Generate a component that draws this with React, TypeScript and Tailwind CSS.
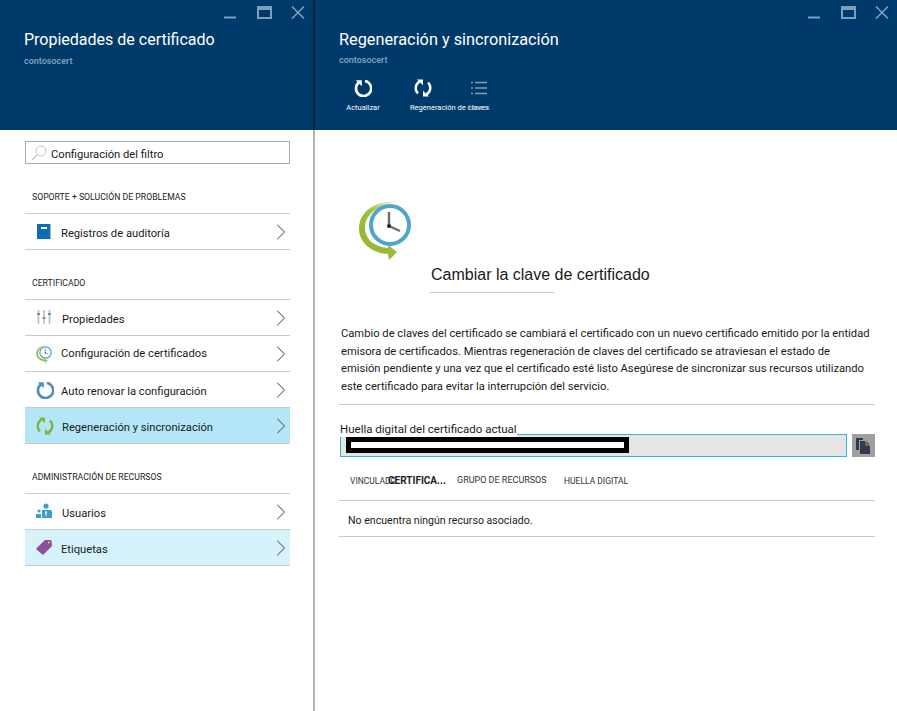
import { ChevronRight } from 'lucide-react'

const FONT = "font-['Roboto','Noto_Sans',sans-serif]"

function WindowButtons({ pad }: { pad: string }) {
  return (
    <div className={`flex h-[30px] items-start justify-end pt-[5px] ${pad}`}>
      <svg width="82" height="14" viewBox="0 0 82 14" fill="none" stroke="#7d9fbe">
        <path d="M1 12.5h12" strokeWidth="2" />
        <path d="M35 2h13v11H35z" strokeWidth="2" />
        <path d="M35 3.5h13" strokeWidth="3" />
        <path d="M69 1.5l12 12M81 1.5l-12 12" strokeWidth="1.6" />
      </svg>
    </div>
  )
}

function BookIcon() {
  return (
    <svg width="16" height="16" viewBox="0 0 16 16">
      <rect x="1" y="1" width="13" height="15" fill="#0f6db6" />
      <rect x="14" y="1" width="1" height="15" fill="#8fbcdd" />
      <rect x="5" y="4" width="6" height="2" fill="#ffffff" />
    </svg>
  )
}

function SlidersIcon() {
  return (
    <svg width="16" height="16" viewBox="0 0 16 16" fill="none">
      <path d="M2.5 1v14M8 1v14M13.5 1v14" stroke="#b5bfc4" strokeWidth="1.6" />
      <path d="M1 5h3M6.5 9h3M12 5h3" stroke="#7c929d" strokeWidth="2" />
    </svg>
  )
}

function ClockIcon({ width, height, id }: { width: number; height: number; id: string }) {
  return (
    <svg width={width} height={height} viewBox="0 0 52 60">
      <defs>
        <linearGradient id={id} x1="0.7" y1="0" x2="0.3" y2="0.6">
          <stop offset="0" stopColor="#dbe6b4" />
          <stop offset="0.45" stopColor="#a4c23f" />
          <stop offset="1" stopColor="#98b838" />
        </linearGradient>
      </defs>
      <path d="M38 2C16 0 0 12 0 29c0 13 12 24 29 25l1 6 8-8-9-7v3C14 47 6 38 6 28 6 14 20 4 38 2z" fill={`url(#${id})`} />
      <circle cx="31" cy="25" r="19" fill="#ffffff" stroke="#4ea5cc" strokeWidth="4" />
      <path d="M30 12v14l11 5" fill="none" stroke="#6b6b6b" strokeWidth="2.4" />
      <circle cx="30" cy="26" r="2" fill="#222222" />
    </svg>
  )
}

function RefreshIcon({ color }: { color: string }) {
  return (
    <svg width="18" height="18" viewBox="0 0 18 18" fill="none">
      <path d="M5 3.4A7.6 7.6 0 1 0 11 2" stroke={color} strokeWidth="2.6" />
      <path d="M1.8 1.2h6v6z" fill={color} />
    </svg>
  )
}

function SyncIcon({ color }: { color: string }) {
  return (
    <svg width="18" height="18" viewBox="0 0 18 18" fill="none">
      <path d="M5.5 2.6A7.4 7.4 0 0 0 4 14.4" stroke={color} strokeWidth="2.4" />
      <path d="M12.5 15.4A7.4 7.4 0 0 0 14 3.6" stroke={color} strokeWidth="2.4" />
      <path d="M3 0.6h6v5.6zM15 17.4H9v-5.6z" fill={color} />
    </svg>
  )
}

function UsersIcon() {
  return (
    <svg width="16" height="16" viewBox="0 0 16 16" fill="#3f9ccb">
      <circle cx="10" cy="3" r="2.6" />
      <path d="M6 7h8a2 2 0 0 1 2 2v6H6z" />
      <circle cx="3" cy="8" r="1.6" />
      <path d="M0 11h5v4H0z" />
      <path d="M10 8l-1 1 1 5 1-5z" fill="#ffffff" />
    </svg>
  )
}

function TagIcon() {
  return (
    <svg width="16" height="16" viewBox="0 0 16 16">
      <path d="M9 1h5.5a1 1 0 0 1 1 1l.5 5-8.5 8.5a1 1 0 0 1-1.2 0L.5 10.5a1 1 0 0 1 0-1.2z" fill="#8b4f9c" />
      <circle cx="12.8" cy="3.6" r="1" fill="#d8c4de" />
    </svg>
  )
}

function CopyIcon() {
  return (
    <svg width="15" height="16" viewBox="0 0 15 16">
      <path d="M0 0h7v2H3v10H0z" fill="#2f3b48" />
      <path d="M4 3h6l4 4v9H4z" fill="#2f3b48" />
      <path d="M10 3v4h4" fill="none" stroke="#a0a0a0" />
    </svg>
  )
}

interface NavRowProps {
  icon: React.ReactNode
  label: string
  bg?: string
  textPad?: string
}

function NavRow({ icon, label, bg = '', textPad = 'pl-[36px] pt-[6px]' }: NavRowProps) {
  return (
    <div className={`relative flex h-[36px] items-center border-b border-[#cbcbcb] ${bg}`}>
      <div className="absolute left-[11px] top-[9px]">{icon}</div>
      <span className={`${textPad} text-[11.2px] text-[#1a1a1a]`}>{label}</span>
      <ChevronRight className="ml-auto -mr-[5px] text-[#666666]" size={28} strokeWidth={0.9} />
    </div>
  )
}

function SectionLabel({ children, className }: { children: string; className: string }) {
  return <div className={`pl-[7px] text-[8.7px] uppercase leading-[10px] text-[#222222] ${className}`}>{children}</div>
}

export default function App() {
  return (
    <div className={`flex h-[711px] w-[897px] overflow-hidden bg-white ${FONT}`}>
      {/* Left blade */}
      <div className="w-[315px] shrink-0 border-r-2 border-[#b4b4b4]">
        <div className="h-[130px] border-r-2 border-[#0d2238] -mr-[2px] bg-[#003a6a] pl-[24px] pr-[9px]">
          <WindowButtons pad="-mr-[1px]" />
          <div className="text-[16px] leading-[20px] text-white">Propiedades de certificado</div>
          <div className="mt-[6px] text-[9px] font-semibold leading-[10px] text-[#7d9fbe]">contosocert</div>
        </div>

        <div className="pl-[25px] pr-[23px] pt-[11px]">
          <div className="flex h-[23px] items-center border border-[#a9a9a9] pl-[5px]">
            <svg width="16" height="16" viewBox="0 0 16 16" fill="none" stroke="#c4c4c4">
              <circle cx="10" cy="6" r="5" />
              <path d="M6 10l-5 5" strokeWidth="1.4" />
            </svg>
            <span className="ml-[4px] pt-[6px] text-[11.2px] text-[#1a1a1a]">Configuración del filtro</span>
          </div>

          <SectionLabel className="mt-[28px] mb-[11px]">Soporte + solución de problemas</SectionLabel>
          <div className="border-t border-[#cbcbcb]">
            <NavRow icon={<BookIcon />} label="Registros de auditoría" />
          </div>

          <SectionLabel className="mt-[28px] mb-[11px]">Certificado</SectionLabel>
          <div className="border-t border-[#cbcbcb]">
            <NavRow icon={<SlidersIcon />} label="Propiedades" textPad="pl-[37px] pt-[6px]" />
            <NavRow
              icon={<ClockIcon width={16} height={18} id="clock-small" />}
              label="Configuración de certificados"
              textPad="pl-[36px] pt-[2px]"
            />
            <NavRow icon={<RefreshIcon color="#4d8fb8" />} label="Auto renovar la configuración" />
            <NavRow
              icon={<SyncIcon color="#7fb53c" />}
              label="Regeneración y sincronización"
              bg="bg-[#b3e7f8]"
              textPad="pl-[37px] pt-[6px]"
            />
          </div>

          <SectionLabel className="mt-[28px] mb-[11px]">Administración de recursos</SectionLabel>
          <div className="border-t border-[#cbcbcb]">
            <NavRow icon={<UsersIcon />} label="Usuarios" textPad="pl-[37px] pt-[6px]" />
            <NavRow icon={<TagIcon />} label="Etiquetas" bg="bg-[#d6f2fb]" />
          </div>
        </div>
      </div>

      {/* Right blade */}
      <div className="min-w-0 flex-1">
        <div className="h-[130px] bg-[#003a6a] pl-[24px] pr-[9px]">
          <WindowButtons pad="-mr-[1px]" />
          <div className="text-[16.3px] leading-[20px] text-white">Regeneración y sincronización</div>
          <div className="mt-[5px] text-[9px] font-semibold leading-[10px] text-[#7d9fbe]">contosocert</div>
          <div className="mt-[14px] flex text-white">
            <div className="flex w-[48px] flex-col items-center">
              <RefreshIcon color="#ffffff" />
              <span className="mt-[6px] whitespace-nowrap text-[7.5px] leading-[10px]">Actualizar</span>
            </div>
            <div className="ml-[12px] flex w-[48px] flex-col items-center">
              <SyncIcon color="#ffffff" />
              <span className="mt-[6px] self-start whitespace-nowrap pl-[11px] text-[7.5px] leading-[10px]">
                Regeneración de claves
              </span>
            </div>
            <div className="ml-[17px] flex w-[30px] flex-col items-center">
              <svg width="18" height="18" viewBox="0 0 18 18" stroke="#7d9fbe" fill="none">
                <path d="M5 3.5h12M5 9h12M5 14.5h12M1 3.5h2M1 9h2M1 14.5h2" strokeWidth="1.4" />
              </svg>
              <span className="mt-[6px] whitespace-nowrap text-[7.5px] leading-[10px] text-[#9db7cf]">Llaves</span>
            </div>
          </div>
        </div>

        <div className="pl-[24px] pr-[22px]">
          <div className="ml-[20px] pt-[70px]">
            <ClockIcon width={52} height={60} id="clock-large" />
          </div>
          <div className="ml-[91px] mt-[5px] w-[124px] whitespace-nowrap border-b border-[#c8c8c8] pb-[7px] pl-[1px] font-['Liberation_Sans',sans-serif] text-[16px] leading-[20px] text-[#1a1a1a]">
            Cambiar la clave de certificado
          </div>

          <p className="mt-[32px] border-b border-[#cbcbcb] pb-[9px] pl-[2px] pr-[5px] text-[11.2px] leading-[17.6px] text-[#1a1a1a]">
            Cambio de claves del certificado se cambiará el certificado con un nuevo certificado emitido por la entidad
            emisora de certificados. Mientras regeneración de claves del certificado se atraviesan el estado de emisión
            pendiente y una vez que el certificado esté listo Asegúrese de sincronizar sus recursos utilizando este
            certificado para evitar la interrupción del servicio.
          </p>

          <div className="relative z-10 mt-[16px] w-fit bg-white pl-[1px] text-[11.5px] leading-[16px] text-[#1a1a1a]">
            Huella digital del certificado actual
          </div>
          <div className="-mt-[3px] ml-[1px] flex items-stretch">
            <div className="relative h-[23px] w-[507px] border border-[#2fb3d6] bg-[#e5e5e5]">
              {/* redacted value */}
              <div className="absolute left-[5px] top-[2px] z-20 h-[16px] w-[283px] border-[5px] border-black bg-white" />
            </div>
            <div className="ml-[5px] flex h-[23px] w-[23px] items-center justify-center bg-[#a0a0a0]">
              <CopyIcon />
            </div>
          </div>

          <div className="mt-[11px] flex h-[33px] items-center whitespace-nowrap border-b border-[#cbcbcb] pb-[7px] text-[8.5px] uppercase text-[#333333]">
            <span className="w-[49px] pl-[11px]">Vinculado</span>
            <span className="w-[69px] text-[10px] font-bold text-[#222222]">Certifica...</span>
            <span className="w-[107px] text-[9px]">Grupo de recursos</span>
            <span>Huella digital</span>
          </div>
          <div className="flex h-[36px] items-center border-b border-[#cbcbcb] pl-[9px] pt-[5px] text-[10.6px] text-[#1a1a1a]">
            No encuentra ningún recurso asociado.
          </div>
        </div>
      </div>
    </div>
  )
}
